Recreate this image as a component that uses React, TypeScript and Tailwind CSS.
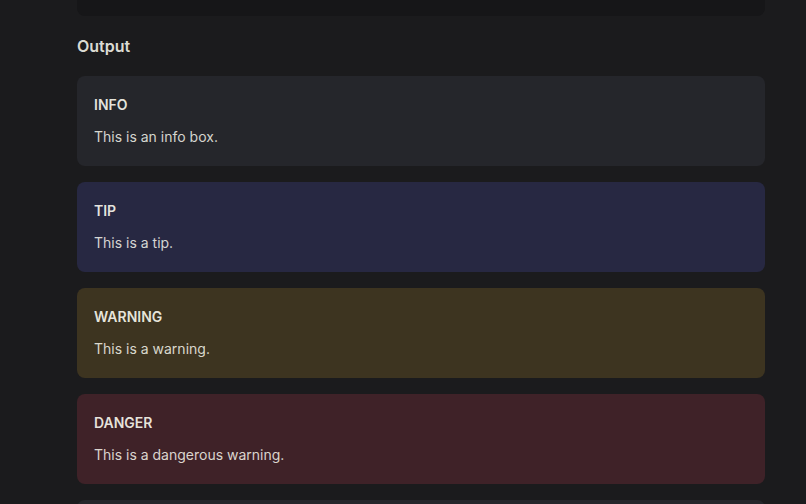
const blocks = [
  { title: "INFO", text: "This is an info box.", bg: "bg-[#25262b]" },
  { title: "TIP", text: "This is a tip.", bg: "bg-[#272842]" },
  { title: "WARNING", text: "This is a warning.", bg: "bg-[#3d3420]" },
  { title: "DANGER", text: "This is a dangerous warning.", bg: "bg-[#3f2228]" },
]

function CustomBlock({ title, text, bg }: { title: string; text: string; bg: string }) {
  return (
    <div className={`rounded-lg border border-transparent px-4 pt-4 pb-2 text-[14px] leading-6 ${bg}`}>
      <p className="mb-2 font-semibold text-[rgba(255,255,245,0.88)]">{title}</p>
      <p className="mt-2 mb-2 text-[rgba(255,255,245,0.82)]">{text}</p>
    </div>
  )
}

export default function App() {
  return (
    <div
      className="h-[504px] overflow-hidden bg-[#1b1b1d] pl-[77px] pr-[41px]"
      style={{ fontFamily: "Inter, 'Noto Sans', sans-serif" }}
    >
      <div className="h-4 rounded-b-lg bg-[#161618]" />
      <h2 className="mt-[18px] text-[16px] leading-6 font-semibold text-[rgba(255,255,245,0.86)]">Output</h2>
      <div className="mt-[18px] flex flex-col gap-4">
        {blocks.map((b) => (
          <CustomBlock key={b.title} {...b} />
        ))}
        <div className="h-[90px] rounded-lg bg-[#25262b]" />
      </div>
    </div>
  )
}
